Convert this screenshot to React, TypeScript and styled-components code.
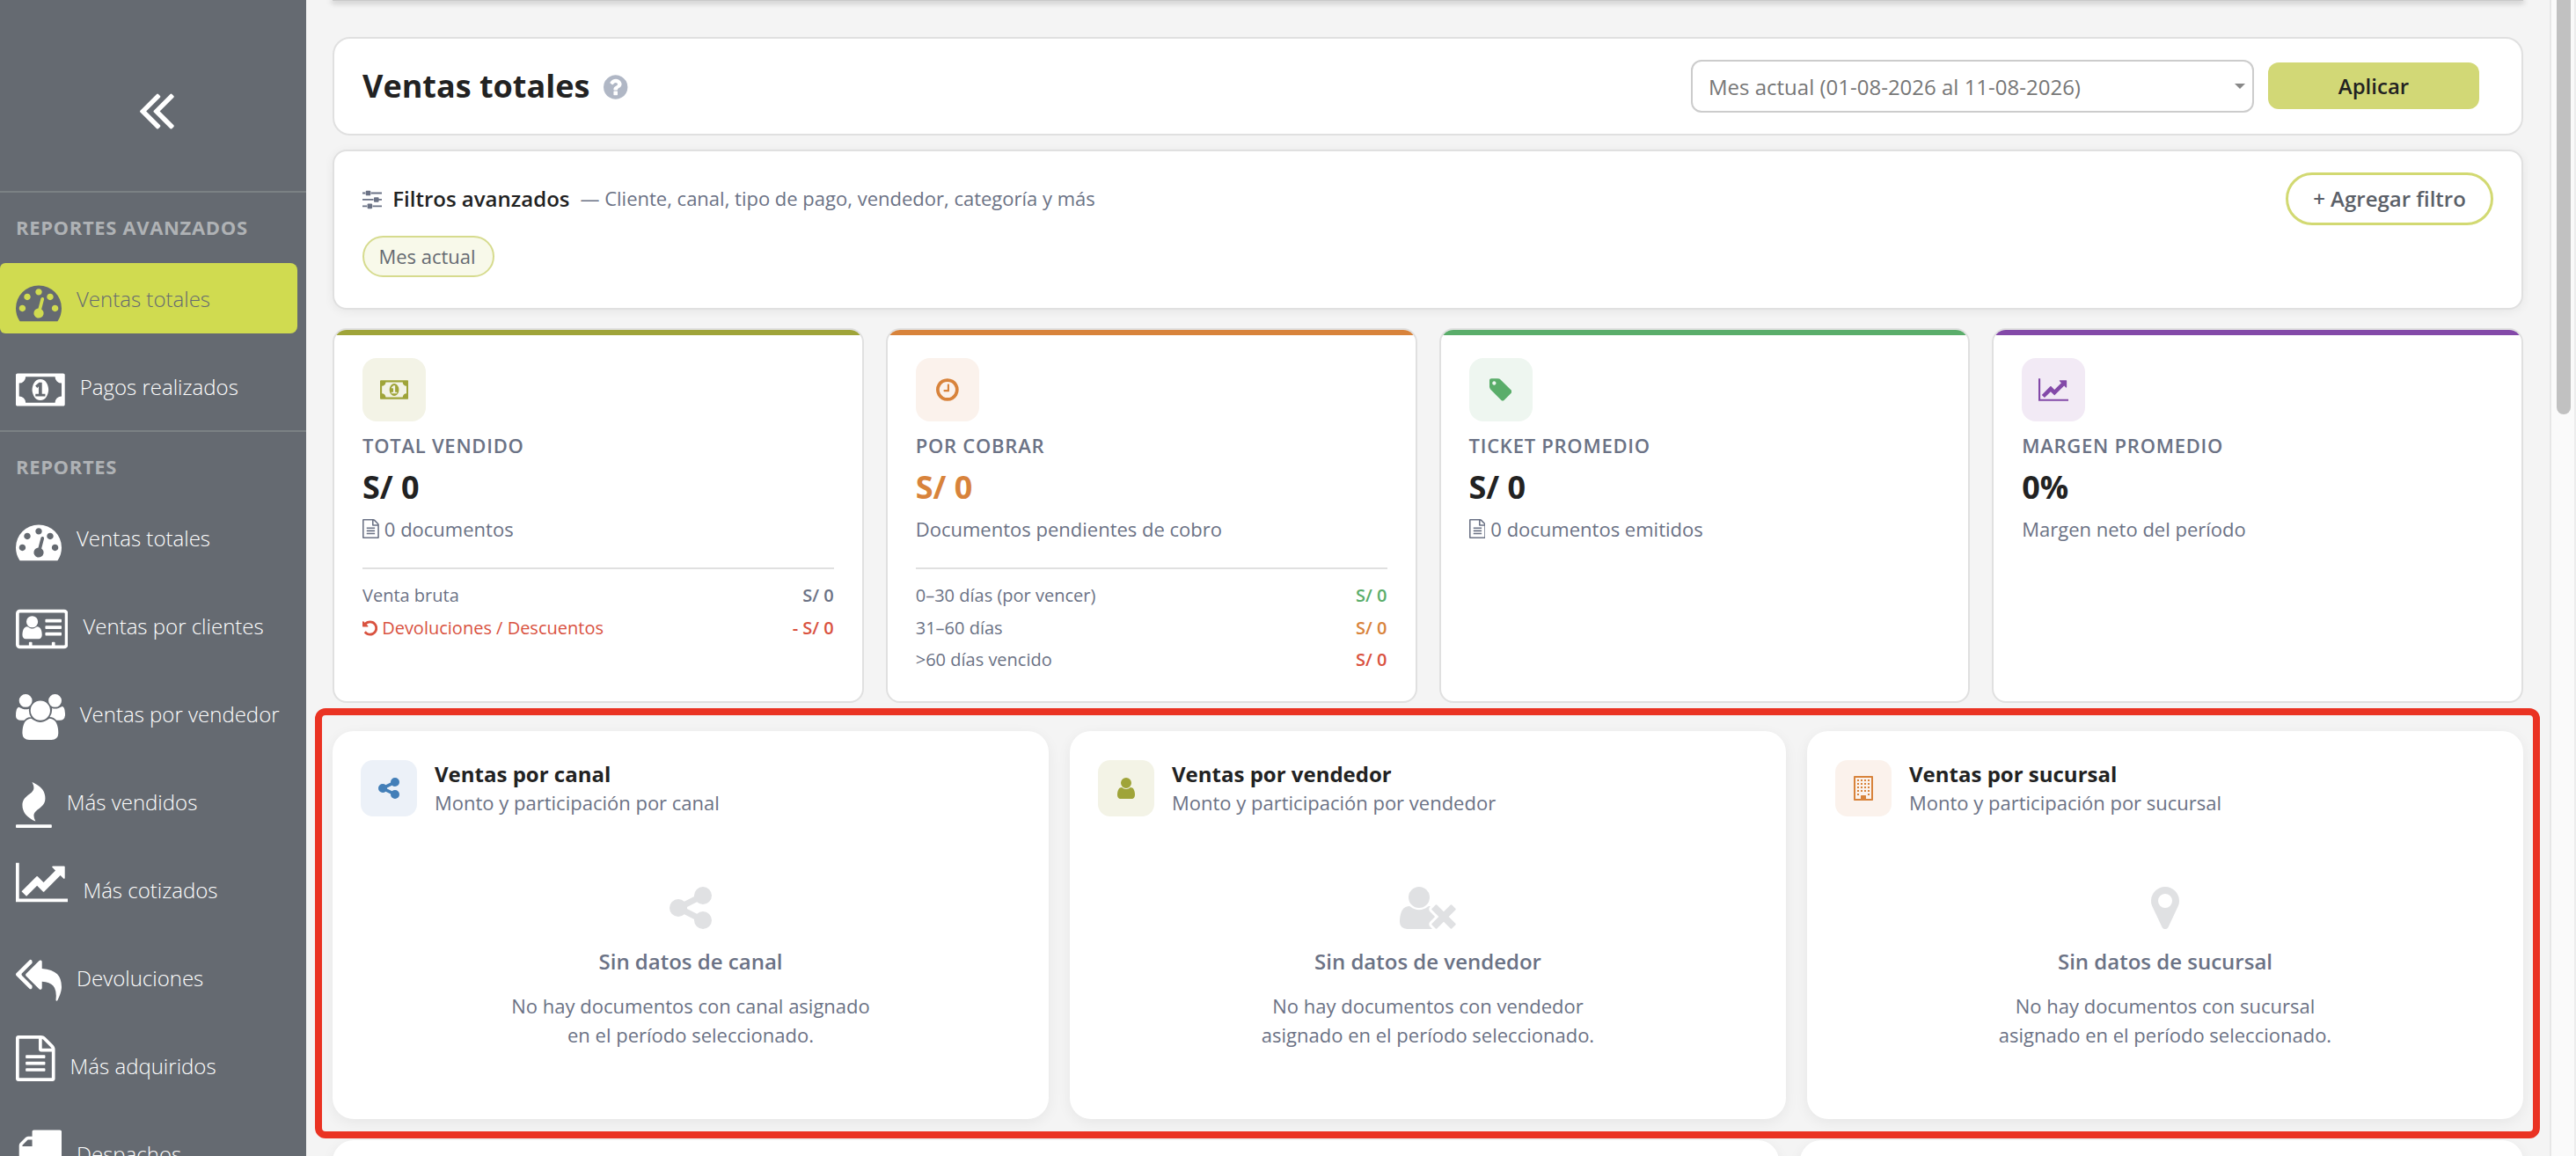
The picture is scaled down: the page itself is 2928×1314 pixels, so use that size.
import React from "react";
import styled, { createGlobalStyle } from "styled-components";

const GlobalStyle = createGlobalStyle`
  *, *::before, *::after { box-sizing: border-box; }
  html, body { margin: 0; padding: 0; overflow: hidden; }
  body {
    background: #f4f4f4;
    color: #222;
    font-family: "Open Sans", "Noto Sans", sans-serif;
    -webkit-font-smoothing: antialiased;
  }
  p, h1, h2, h3 { margin: 0; }
`;

type Glyph = { w: number; x?: number; d: string };

const glyphs: Record<string, Glyph> = {
  gauge: {
    w: 1792,
    d: "M384 1152q0-53-37.5-90.5t-90.5-37.5-90.5 37.5-37.5 90.5 37.5 90.5 90.5 37.5 90.5-37.5 37.5-90.5zm192-448q0-53-37.5-90.5t-90.5-37.5-90.5 37.5-37.5 90.5 37.5 90.5 90.5 37.5 90.5-37.5 37.5-90.5zm428 481l101-382q6-26-7.5-48.5t-38.5-29.5-48 6.5-30 39.5l-101 382q-60 5-107 43.5t-63 98.5q-20 77 20 146t117 89 146-20 89-117q16-60-6-117t-72-91zm660-33q0-53-37.5-90.5t-90.5-37.5-90.5 37.5-37.5 90.5 37.5 90.5 90.5 37.5 90.5-37.5 37.5-90.5zm-640-640q0-53-37.5-90.5t-90.5-37.5-90.5 37.5-37.5 90.5 37.5 90.5 90.5 37.5 90.5-37.5 37.5-90.5zm448 192q0-53-37.5-90.5t-90.5-37.5-90.5 37.5-37.5 90.5 37.5 90.5 90.5 37.5 90.5-37.5 37.5-90.5zm320 448q0 261-141 483-19 29-54 29h-1402q-35 0-54-29-141-221-141-483 0-182 71-348t191-286 286-191 348-71 348 71 286 191 191 286 71 348z",
  },
  money: {
    w: 1920,
    d: "M768 1152h384v-96h-128v-448h-114l-148 137 77 80q42-37 55-57h2v288h-128v96zm512-256q0 70-21 142t-59.5 134-101.5 101-138 39-138-39-101.5-101-59.5-134-21-142 21-142 59.5-134 101.5-101 138-39 138 39 101.5 101 59.5 134 21 142zm512 256v-512q-106 0-181-75t-75-181h-1152q0 106-75 181t-181 75v512q106 0 181 75t75 181h1152q0-106 75-181t181-75zm128-832v1152q0 26-19 45t-45 19h-1792q-26 0-45-19t-19-45v-1152q0-26 19-45t45-19h1792q26 0 45 19t19 45z",
  },
  addressCard: {
    w: 2048,
    d: "M1024 1131q0-64-9-117.5t-29.5-103-60.5-78-97-28.5q-6 4-30 18t-37.5 21.5-35.5 17.5-43 14.5-42 4.5-42-4.5-43-14.5-35.5-17.5-37.5-21.5-30-18q-57 0-97 28.5t-60.5 78-29.5 103-9 117.5 37 106.5 91 42.5h512q54 0 91-42.5t37-106.5zm-157-520q0-94-66.5-160.5t-160.5-66.5-160.5 66.5-66.5 160.5 66.5 160.5 160.5 66.5 160.5-66.5 66.5-160.5zm925 509v-64q0-14-9-23t-23-9h-576q-14 0-23 9t-9 23v64q0 14 9 23t23 9h576q14 0 23-9t9-23zm0-256v-64q0-14-9-23t-23-9h-576q-14 0-23 9t-9 23v64q0 14 9 23t23 9h576q14 0 23-9t9-23zm0-256v-64q0-14-9-23t-23-9h-576q-14 0-23 9t-9 23v64q0 14 9 23t23 9h576q14 0 23-9t9-23zM1920 1504v-1216q0-13-9.5-22.5t-22.5-9.5h-1728q-13 0-22.5 9.5t-9.5 22.5v1216q0 13 9.5 22.5t22.5 9.5h352v-96q0-14 9-23t23-9h64q14 0 23 9t9 23v96h768v-96q0-14 9-23t23-9h64q14 0 23 9t9 23v96h352q13 0 22.5-9.5t9.5-22.5zm128-1216v1216q0 66-47 113t-113 47h-1728q-66 0-113-47t-47-113v-1216q0-66 47-113t113-47h1728q66 0 113 47t47 113z",
  },
  users: {
    w: 1920,
    d: "M593 896q-162 5-265 128h-134q-82 0-138-40.5t-56-118.5q0-353 124-353 6 0 43.5 21t97.5 42.5 119 21.5q67 0 133-23-5 37-5 66 0 159 93 282zm1071 637q0 120-73 189.5t-194 69.5h-874q-121 0-194-69.5t-73-189.5q0-53 3.5-103.5t14-109 26.5-108.5 43-97.5 62-81 85.5-53.5 111.5-20q10 0 43 21.5t73 48 107 48 135 21.5 135-21.5 107-48 73-48 43-21.5q61 0 111.5 20t85.5 53.5 62 81 43 97.5 26.5 108.5 14 109 3.5 103.5zm-1024-1277q0 106-75 181t-181 75-181-75-75-181 75-181 181-75 181 75 75 181zm704 384q0 159-112.5 271.5t-271.5 112.5-271.5-112.5-112.5-271.5 112.5-271.5 271.5-112.5 271.5 112.5 112.5 271.5zm576 225q0 78-56 118.5t-138 40.5h-134q-103-123-265-128 93-123 93-282 0-29-5-66 66 23 133 23 59 0 119-21.5t97.5-42.5 43.5-21q124 0 124 353zm-128-609q0 106-75 181t-181 75-181-75-75-181 75-181 181-75 181 75 75 181z",
  },
  fire: {
    w: 1408,
    x: 192,
    d: "M1600 1696v64q0 13-9.5 22.5t-22.5 9.5h-1344q-13 0-22.5-9.5t-9.5-22.5v-64q0-13 9.5-22.5t22.5-9.5h1344q13 0 22.5 9.5t9.5 22.5zm-256-1056q0 78-24.5 144t-64 112.5-87.5 88-96 77.5-87.5 72-64 81.5-24.5 96.5q0 96 67 224l-4-1 1 1q-90-41-160-83t-138.5-100-113.5-122.5-72.5-150.5-27.5-184q0-78 24.5-144t64-112.5 87.5-88 96-77.5 87.5-72 64-81.5 24.5-96.5q0-94-66-224l3 1-1-1q90 41 160 83t138.5 100 113.5 122.5 72.5 150.5 27.5 184z",
  },
  lineChart: {
    w: 2048,
    d: "M2048 1536v128h-2048v-1536h128v1408h1920zm-128-1248v435q0 21-19.5 29.5t-35.5-7.5l-121-121-633 633q-10 10-23 10t-23-10l-233-233-416 416-192-192 585-585q10-10 23-10t23 10l233 233 464-464-121-121q-16-16-7.5-35.5t29.5-19.5h435q14 0 23 9t9 23z",
  },
  replyAll: {
    w: 1792,
    d: "M640 1082v70q0 42-39 59-13 5-25 5-27 0-45-19l-512-512q-19-19-19-45t19-45l512-512q29-31 70-14 39 17 39 59v69l-397 398q-19 19-19 45t19 45zm1152 58q0 58-17 133.5t-38.5 138-48 125-40.5 90.5l-20 40q-8 17-28 17-6 0-9-1-25-8-23-34 43-400-106-565-64-71-170.5-110.5t-267.5-52.5v251q0 42-39 59-13 5-25 5-27 0-45-19l-512-512q-19-19-19-45t19-45l512-512q29-31 70-14 39 17 39 59v262q411 28 599 221 169 173 169 509z",
  },
  fileText: {
    w: 1536,
    x: 128,
    d: "M1596 380q28 28 48 76t20 88v1152q0 40-28 68t-68 28h-1344q-40 0-68-28t-28-68v-1600q0-40 28-68t68-28h896q40 0 88 20t76 48zm-444-244v376h376q-10-29-22-41l-313-313q-12-12-41-22zm384 1528v-1024h-416q-40 0-68-28t-28-68v-416h-768v1536h1280zm-1024-864q0-14 9-23t23-9h704q14 0 23 9t9 23v64q0 14-9 23t-23 9h-704q-14 0-23-9t-9-23v-64zm736 224q14 0 23 9t9 23v64q0 14-9 23t-23 9h-704q-14 0-23-9t-9-23v-64q0-14 9-23t23-9h704zm0 256q14 0 23 9t9 23v64q0 14-9 23t-23 9h-704q-14 0-23-9t-9-23v-64q0-14 9-23t23-9h704z",
  },
  truck: {
    w: 1792,
    d: "M640 1408q0-52-38-90t-90-38-90 38-38 90 38 90 90 38 90-38 38-90zm-384-512h384v-256h-158q-13 0-22 9l-195 195q-9 9-9 22v30zm1280 512q0-52-38-90t-90-38-90 38-38 90 38 90 90 38 90-38 38-90zm256-1088v1024q0 15-4 26.5t-13.5 18.5-16.5 11.5-23.5 6-22.5 2-25.5 0-22.5-.5q0 106-75 181t-181 75-181-75-75-181h-384q0 106-75 181t-181 75-181-75-75-181h-64q-3 0-22.5.5t-25.5 0-22.5-2-23.5-6-16.5-11.5-13.5-18.5-4-26.5q0-26 19-45t45-19v-320q0-8-.5-35t0-38 2.5-34.5 6.5-37 14-30.5 22.5-30l198-198q19-19 50.5-32t58.5-13h160v-192q0-26 19-45t45-19h1024q26 0 45 19t19 45z",
  },
  share: {
    w: 1536,
    x: 128,
    d: "M1344 1024q133 0 226.5 93.5t93.5 226.5-93.5 226.5-226.5 93.5-226.5-93.5-93.5-226.5q0-12 2-34l-360-180q-92 86-218 86-133 0-226.5-93.5t-93.5-226.5 93.5-226.5 226.5-93.5q126 0 218 86l360-180q-2-22-2-34 0-133 93.5-226.5t226.5-93.5 226.5 93.5 93.5 226.5-93.5 226.5-226.5 93.5q-126 0-218-86l-360 180q2 22 2 34t-2 34l360 180q92-86 218-86z",
  },
  user: {
    w: 1280,
    x: 256,
    d: "M1536 1399q0 109-62.5 187t-150.5 78h-854q-88 0-150.5-78t-62.5-187q0-85 8.5-160.5t31.5-152 58.5-131 94-89 134.5-34.5q131 128 313 128t313-128q76 0 134.5 34.5t94 89 58.5 131 31.5 152 8.5 160.5zm-256-887q0 159-112.5 271.5t-271.5 112.5-271.5-112.5-112.5-271.5 112.5-271.5 271.5-112.5 271.5 112.5 112.5 271.5z",
  },
  userTimes: {
    w: 2048,
    d: "M704 896q-159 0-271.5-112.5t-112.5-271.5 112.5-271.5 271.5-112.5 271.5 112.5 112.5 271.5-112.5 271.5-271.5 112.5zm1077 320l249 249q9 9 9 23 0 13-9 22l-136 136q-9 9-22 9-14 0-23-9l-249-249-249 249q-9 9-23 9-13 0-22-9l-136-136q-9-9-9-22 0-14 9-23l249-249-249-249q-9-9-9-23 0-13 9-22l136-136q9-9 22-9 14 0 23 9l249 249 249-249q9-9 23-9 13 0 22 9l136 136q9 9 9 22 0 14-9 23zm-498 0l-181 181q-37 37-37 91 0 53 37 90l83 83q-21 3-44 3h-874q-121 0-194-69t-73-190q0-53 3.5-103.5t14-109 26.5-108.5 43-97.5 62-81 85.5-53.5 111.5-20q19 0 39 17 154 122 319 122t319-122q20-17 39-17 28 0 57 6-28 27-41 50t-13 56q0 54 37 91z",
  },
  marker: {
    w: 1024,
    x: 384,
    d: "M1152 640q0-106-75-181t-181-75-181 75-75 181 75 181 181 75 181-75 75-181zm256 0q0 109-33 179l-364 774q-16 33-47.5 52t-67.5 19-67.5-19-46.5-52l-365-774q-33-70-33-179 0-212 150-362t362-150 362 150 150 362z",
  },
  clock: {
    w: 1536,
    x: 128,
    d: "M1024 544v448q0 14-9 23t-23 9h-320q-14 0-23-9t-9-23v-64q0-14 9-23t23-9h224v-352q0-14 9-23t23-9h64q14 0 23 9t9 23zm416 352q0-148-73-273t-198-198-273-73-273 73-198 198-73 273 73 273 198 198 273 73 273-73 198-198 73-273zm224 0q0 209-103 385.5t-279.5 279.5-385.5 103-385.5-103-279.5-279.5-103-385.5 103-385.5 279.5-279.5 385.5-103 385.5 103 279.5 279.5 103 385.5z",
  },
  tag: {
    w: 1536,
    x: 128,
    d: "M576 448q0-53-37.5-90.5t-90.5-37.5-90.5 37.5-37.5 90.5 37.5 90.5 90.5 37.5 90.5-37.5 37.5-90.5zm1067 576q0 53-37 90l-491 492q-39 37-91 37-53 0-90-37l-715-716q-38-37-64.5-101t-26.5-117v-416q0-52 38-90t90-38h416q53 0 117 26.5t102 64.5l715 714q37 39 37 91z",
  },
  undo: {
    w: 1536,
    x: 128,
    d: "M1664 896q0 156-61 298t-164 245-245 164-298 61q-172 0-327-72.5t-264-204.5q-7-10-6.5-22.5t8.5-20.5l137-138q10-9 25-9 16 2 23 12 73 95 179 147t225 52q104 0 198.5-40.5t163.5-109.5 109.5-163.5 40.5-198.5-40.5-198.5-109.5-163.5-163.5-109.5-198.5-40.5q-98 0-188 35.5t-160 101.5l137 138q31 30 14 69-17 40-59 40h-448q-26 0-45-19t-19-45v-448q0-42 40-59 39-17 69 14l130 129q107-101 244.5-156.5t284.5-55.5q156 0 298 61t245 164 164 245 61 298z",
  },
  sliders: {
    w: 1536,
    d: "M352 1408v128h-352v-128h352zm352-128q26 0 45 19t19 45v256q0 26-19 45t-45 19h-256q-26 0-45-19t-19-45v-256q0-26 19-45t45-19h256zm160-384v128h-864v-128h864zm-640-512v128h-224v-128h224zm1312 1024v128h-736v-128h736zm-960-1152q26 0 45 19t19 45v256q0 26-19 45t-45 19h-256q-26 0-45-19t-19-45v-256q0-26 19-45t45-19h256zm640 512q26 0 45 19t19 45v256q0 26-19 45t-45 19h-256q-26 0-45-19t-19-45v-256q0-26 19-45t45-19h256zm320 128v128h-288v-128h288zm0-512v128h-864v-128h864z",
  },
  question: {
    w: 1536,
    x: 128,
    d: "M1024 1376v-192q0-14-9-23t-23-9h-192q-14 0-23 9t-9 23v192q0 14 9 23t23 9h192q14 0 23-9t9-23zm256-672q0-88-55.5-163t-138.5-116-170-41q-243 0-371 213-15 24 8 42l132 100q7 6 19 6 16 0 25-12 53-68 86-92 34-24 86-24 48 0 85.5 26t37.5 59q0 38-20 61t-68 45q-63 28-115.5 86.5t-52.5 125.5v36q0 14 9 23t23 9h192q14 0 23-9t9-23q0-19 21.5-49.5t54.5-49.5q32-18 49-28.5t46-35 44.5-48 28-60.5 12.5-81zm384 192q0 209-103 385.5t-279.5 279.5-385.5 103-385.5-103-279.5-279.5-103-385.5 103-385.5 279.5-279.5 385.5-103 385.5 103 279.5 279.5 103 385.5z",
  },
  collapse: {
    w: 966,
    x: 429,
    d: "M1011 1376q0 13-10 23l-50 50q-10 10-23 10t-23-10l-466-466q-10-10-10-23t10-23l466-466q10-10 23-10t23 10l50 50q10 10 10 23t-10 23l-393 393 393 393q10 10 10 23zm384 0q0 13-10 23l-50 50q-10 10-23 10t-23-10l-466-466q-10-10-10-23t10-23l466-466q10-10 23-10t23 10l50 50q10 10 10 23t-10 23l-393 393 393 393q10 10 10 23z",
  },
  building: {
    w: 1408,
    d: "M64 0h1280q26 0 45 19t19 45v1664q0 26-19 45t-45 19h-1280q-26 0-45-19t-19-45v-1664q0-26 19-45t45-19zM128 128v1536h384v-224q0-13 9.5-22.5t22.5-9.5h320q13 0 22.5 9.5t9.5 22.5v224h384v-1536zM256 256h128v128h-128zM512 256h128v128h-128zM768 256h128v128h-128zM1024 256h128v128h-128zM256 512h128v128h-128zM512 512h128v128h-128zM768 512h128v128h-128zM1024 512h128v128h-128zM256 768h128v128h-128zM512 768h128v128h-128zM768 768h128v128h-128zM1024 768h128v128h-128zM256 1024h128v128h-128zM512 1024h128v128h-128zM768 1024h128v128h-128zM1024 1024h128v128h-128zM256 1280h128v128h-128zM1024 1280h128v128h-128z",
  },
};

const Svg = styled.svg<{ $size: number; $w: number }>`
  display: block;
  flex: none;
  height: ${(p) => p.$size}px;
  width: ${(p) => (p.$size * p.$w) / 1792}px;
  fill: currentColor;
`;

function Icon({ name, size }: { name: string; size: number }) {
  const g = glyphs[name];
  return (
    <Svg $size={size} $w={g.w} viewBox={`${g.x ?? 0} 0 ${g.w} 1792`} aria-hidden="true">
      <path d={g.d} fillRule={name === "building" ? "evenodd" : "nonzero"} />
    </Svg>
  );
}

/* ---------- Shell ---------- */

const Shell = styled.div`
  display: flex;
  width: 2928px;
  height: 1314px;
  overflow: hidden;
`;

const Sidebar = styled.nav`
  flex: none;
  width: 348px;
  height: 1314px;
  overflow: hidden;
  background: #656a71;
  color: #fff;
`;

const Collapse = styled.div`
  display: flex;
  align-items: flex-start;
  padding: 88px 0 0 159px;
  height: 217px;
`;

const SectionTitle = styled.div`
  border-top: 2px solid #7b8184;
  padding: 0 18px;
  height: 82px;
  line-height: 79px;
  font-size: 22px;
  font-weight: 700;
  letter-spacing: 0.65px;
  color: #afb2b5;
`;

const NavItem = styled.div<{ $active?: boolean }>`
  display: flex;
  gap: 17px;
  width: 338px;
  height: 80px;
  margin-bottom: 20px;
  padding-left: 18px;
  border-radius: 6px 8px 8px 6px;
  background: ${(p) => (p.$active ? "#d0db50" : "transparent")};
  color: ${(p) => (p.$active ? "#656a71" : "#fff")};
`;

const NavGroup = styled.div<{ $last?: boolean }>`
  height: ${(p) => (p.$last ? "auto" : "190px")};
`;

const NavIcon = styled.span<{ $top: number }>`
  padding-top: ${(p) => p.$top}px;
`;

const NavText = styled.span`
  line-height: 82px;
  font-size: 24px;
  font-weight: 300;
  white-space: nowrap;
`;

const Main = styled.main`
  flex: none;
  width: 2550px;
  height: 1314px;
  padding: 0 30px;
  overflow: hidden;
`;

const ScrollTrack = styled.div`
  flex: none;
  width: 30px;
  height: 1314px;
  padding-left: 6px;
  border-left: 2px solid #e7e7e7;
  border-right: 2px solid #ededed;
  background: #fafafa;
`;

const ScrollThumb = styled.div`
  width: 16px;
  height: 471px;
  border-radius: 0 0 8px 8px;
  background: #c1c1c1;
`;

/* ---------- Header ---------- */

const PreviousCardEdge = styled.div`
  height: 1px;
  margin-bottom: 41px;
  background: #c9c9c9;
  box-shadow: 0 1px 6px 1px rgba(0, 0, 0, 0.3);
`;

const HeaderCard = styled.header`
  display: flex;
  align-items: center;
  height: 112px;
  padding: 0 48px 0 32px;
  border: 2px solid #e0e0e0;
  border-radius: 20px;
  background: #fff;
`;

const PageTitle = styled.h1`
  font-size: 36px;
  font-weight: 700;
  line-height: 48px;
`;

const Help = styled.span`
  margin: 1px auto 0 16px;
  color: #b0b7c5;
`;

const PeriodSelect = styled.div`
  display: flex;
  align-items: center;
  justify-content: space-between;
  width: 640px;
  height: 60px;
  margin-right: 16px;
  padding: 0 8px 0 18px;
  border: 2px solid #ccc;
  border-radius: 12px;
  font-size: 24px;
  color: #777;
`;

const Caret = styled.span`
  border: 6px solid transparent;
  border-top-color: #888;
  border-bottom: 0;
`;

const ApplyButton = styled.button`
  width: 240px;
  height: 53px;
  margin-bottom: 1px;
  padding: 0;
  border: 0;
  border-radius: 12px;
  background: #d2d876;
  color: #222;
  font: 600 24px "Open Sans", "Noto Sans", sans-serif;
`;

/* ---------- Filters ---------- */

const FilterCard = styled.section`
  height: 182px;
  margin: 16px 0 21px;
  padding: 24px 32px 0;
  border: 2px solid #e0e0e0;
  border-radius: 16px;
  background: #fff;
  box-shadow: 0 2px 12px rgba(0, 0, 0, 0.06);
`;

const FilterHead = styled.div`
  display: flex;
  align-items: center;
  height: 60px;
  color: #6b7285;
`;

const FilterTitle = styled.h2`
  margin: 0 12px;
  padding-bottom: 2px;
  font-size: 24px;
  font-weight: 600;
  color: #222;
`;

const FilterHint = styled.span`
  margin-right: auto;
  padding-bottom: 2px;
  font-size: 22px;
`;

const AddFilter = styled.button`
  width: 236px;
  height: 60px;
  padding: 0 0 1px;
  border: 3px solid #d2d972;
  border-radius: 30px;
  background: #fff;
  color: #5b6068;
  font: 600 24px "Open Sans", "Noto Sans", sans-serif;
`;

const Chip = styled.span`
  display: inline-flex;
  align-items: center;
  justify-content: center;
  width: 150px;
  height: 47px;
  margin-top: 12px;
  padding: 0 3px 2px 0;
  border: 2px solid #d6db8e;
  border-radius: 24px;
  background: #f8f9ea;
  font-size: 22px;
  color: #656a71;
`;

/* ---------- KPI cards ---------- */

const KpiGrid = styled.section`
  display: grid;
  grid-template-columns: repeat(4, 1fr);
  gap: 25px;
  height: 426px;
`;

const KpiCard = styled.article`
  overflow: hidden;
  border: 2px solid #e0e0e0;
  border-radius: 16px;
  background: #fff;
`;

const KpiStrip = styled.div<{ $color: string }>`
  height: 6px;
  background: ${(p) => p.$color};
`;

const KpiBody = styled.div`
  display: flex;
  flex-direction: column;
  padding: 26px 32px 0;
  color: #6b7285;
`;

const IconTile = styled.div<{ $size: number; $color: string; $bg: string }>`
  display: flex;
  flex: none;
  align-items: center;
  justify-content: center;
  width: ${(p) => p.$size}px;
  height: ${(p) => p.$size}px;
  border-radius: ${(p) => (p.$size > 70 ? 16 : 14)}px;
  background: ${(p) => p.$bg};
  color: ${(p) => p.$color};
`;

const KpiLabel = styled.h2`
  margin-top: 12px;
  font-size: 22px;
  font-weight: 600;
  line-height: 30px;
  letter-spacing: 0.75px;
`;

const KpiValue = styled.p<{ $color: string }>`
  margin-top: 11px;
  font-size: 36px;
  font-weight: 700;
  line-height: 44px;
  color: ${(p) => p.$color};
`;

const KpiNote = styled.p`
  display: flex;
  align-items: center;
  gap: 6px;
  margin-top: 10px;
  font-size: 22px;
  line-height: 30px;
`;

const Breakdown = styled.div`
  margin-top: 29px;
  padding-top: 12px;
  border-top: 2px solid #e0e0e0;
`;

const BreakdownRow = styled.div<{ $color?: string }>`
  display: flex;
  justify-content: space-between;
  height: 36.6px;
  font-size: 20px;
  line-height: 36px;
  color: ${(p) => p.$color ?? "inherit"};
`;

const RowLabel = styled.span`
  display: flex;
  align-items: center;
  gap: 5px;
`;

const RowAmount = styled.span<{ $color?: string }>`
  font-weight: 600;
  color: ${(p) => p.$color ?? "inherit"};
`;

/* ---------- Panels ---------- */

const Highlighted = styled.section`
  position: relative;
  display: grid;
  grid-template-columns: repeat(3, 1fr);
  gap: 24px;
  height: 441px;
  margin: 32px 0 24px;
`;

const HighlightFrame = styled.div`
  position: absolute;
  top: -26px;
  bottom: -22px;
  left: -20px;
  right: -19px;
  border: 8px solid #ea3323;
  border-radius: 12px;
  pointer-events: none;
`;

const Panel = styled.article`
  padding: 31px 32px 0;
  border-radius: 24px;
  background: #fff;
  box-shadow: 0 4px 16px rgba(0, 0, 0, 0.06);
  color: #6b7285;
`;

const PanelHead = styled.div`
  display: flex;
  align-items: center;
  gap: 20px;
  height: 68px;
`;

const PanelTitle = styled.h2`
  font-size: 24px;
  font-weight: 700;
  line-height: 33px;
  color: #222;
`;

const PanelSub = styled.p`
  font-size: 22px;
  line-height: 33px;
`;

const Empty = styled.div`
  display: flex;
  flex-direction: column;
  align-items: center;
  margin-top: 74px;
  text-align: center;
`;

const EmptyIcon = styled.span`
  color: #e0e1e3;
`;

const EmptyTitle = styled.h3`
  margin-top: 15px;
  font-size: 24px;
  font-weight: 600;
  line-height: 36px;
`;

const EmptyText = styled.p`
  margin-top: 16px;
  font-size: 22px;
  line-height: 33px;
`;

const NextRow = styled.div`
  display: grid;
  grid-template-columns: 1644px 1fr;
  gap: 24px;
  height: 200px;
`;

/* ---------- Data ---------- */

type Nav = { icon: string; label: string; top: number; active?: boolean };

const advanced: Nav[] = [
  { icon: "gauge", label: "Ventas totales", top: 17.5, active: true },
  { icon: "money", label: "Pagos realizados", top: 17.5 },
];

const reports: Nav[] = [
  { icon: "gauge", label: "Ventas totales", top: 17.5 },
  { icon: "addressCard", label: "Ventas por clientes", top: 17.5 },
  { icon: "users", label: "Ventas por vendedor", top: 17.5 },
  { icon: "fire", label: "Más vendidos", top: 17.5 },
  { icon: "lineChart", label: "Más cotizados", top: 5.5 },
  { icon: "replyAll", label: "Devoluciones", top: 17.5 },
  { icon: "fileText", label: "Más adquiridos", top: 5.5 },
  { icon: "truck", label: "Despachos", top: 5.5 },
];

const GREEN = "#5aad6a";
const ORANGE = "#d8833b";
const RED = "#d9523f";
const OLIVE = "#9fa439";
const PURPLE = "#8349a8";

type Row = { label: string; amount: string; icon?: string; rowColor?: string; color?: string };
type Kpi = {
  icon: string;
  color: string;
  bg: string;
  label: string;
  value: string;
  valueColor: string;
  note: string;
  noteIcon?: boolean;
  rows?: Row[];
};

const kpis: Kpi[] = [
  {
    icon: "money", color: OLIVE, bg: "#f3f3e6", label: "TOTAL VENDIDO", value: "S/ 0", valueColor: "#222",
    note: "0 documentos", noteIcon: true,
    rows: [
      { label: "Venta bruta", amount: "S/ 0" },
      { label: "Devoluciones / Descuentos", amount: "- S/ 0", icon: "undo", rowColor: RED },
    ],
  },
  {
    icon: "clock", color: ORANGE, bg: "#fbf2ec", label: "POR COBRAR", value: "S/ 0", valueColor: ORANGE,
    note: "Documentos pendientes de cobro",
    rows: [
      { label: "0–30 días (por vencer)", amount: "S/ 0", color: GREEN },
      { label: "31–60 días", amount: "S/ 0", color: ORANGE },
      { label: ">60 días vencido", amount: "S/ 0", color: RED },
    ],
  },
  {
    icon: "tag", color: GREEN, bg: "#eef6f0", label: "TICKET PROMEDIO", value: "S/ 0", valueColor: "#222",
    note: "0 documentos emitidos", noteIcon: true,
  },
  {
    icon: "lineChart", color: PURPLE, bg: "#f2eaf5", label: "MARGEN PROMEDIO", value: "0%", valueColor: "#222",
    note: "Margen neto del período",
  },
];

const panels = [
  {
    icon: "share", color: "#437fb8", bg: "#ecf1f8", title: "Ventas por canal",
    sub: "Monto y participación por canal", emptyIcon: "share", empty: "Sin datos de canal",
    lines: ["No hay documentos con canal asignado", "en el período seleccionado."],
  },
  {
    icon: "user", color: OLIVE, bg: "#f3f3e6", title: "Ventas por vendedor",
    sub: "Monto y participación por vendedor", emptyIcon: "userTimes", empty: "Sin datos de vendedor",
    lines: ["No hay documentos con vendedor", "asignado en el período seleccionado."],
  },
  {
    icon: "building", color: ORANGE, bg: "#fbf2ec", title: "Ventas por sucursal",
    sub: "Monto y participación por sucursal", emptyIcon: "marker", empty: "Sin datos de sucursal",
    lines: ["No hay documentos con sucursal", "asignado en el período seleccionado."],
  },
];

function NavList({ items }: { items: Nav[] }) {
  return (
    <>
      {items.map((item) => (
        <NavItem key={item.label} $active={item.active}>
          <NavIcon $top={item.top}>
            <Icon name={item.icon} size={52} />
          </NavIcon>
          <NavText>{item.label}</NavText>
        </NavItem>
      ))}
    </>
  );
}

export default function App() {
  return (
    <Shell>
      <GlobalStyle />
      <Sidebar>
        <Collapse>
          <Icon name="collapse" size={72} />
        </Collapse>
        <SectionTitle>REPORTES AVANZADOS</SectionTitle>
        <NavGroup>
          <NavList items={advanced} />
        </NavGroup>
        <SectionTitle>REPORTES</SectionTitle>
        <NavGroup $last>
          <NavList items={reports} />
        </NavGroup>
      </Sidebar>

      <Main>
        <PreviousCardEdge />
        <HeaderCard>
          <PageTitle>Ventas totales</PageTitle>
          <Help>
            <Icon name="question" size={32} />
          </Help>
          <PeriodSelect>
            Mes actual (01-08-2026 al 11-08-2026)
            <Caret />
          </PeriodSelect>
          <ApplyButton>Aplicar</ApplyButton>
        </HeaderCard>

        <FilterCard>
          <FilterHead>
            <Icon name="sliders" size={26} />
            <FilterTitle>Filtros avanzados</FilterTitle>
            <FilterHint>— Cliente, canal, tipo de pago, vendedor, categoría y más</FilterHint>
            <AddFilter>+ Agregar filtro</AddFilter>
          </FilterHead>
          <Chip>Mes actual</Chip>
        </FilterCard>

        <KpiGrid>
          {kpis.map((k) => (
            <KpiCard key={k.label}>
              <KpiStrip $color={k.color} />
              <KpiBody>
                <IconTile $size={72} $color={k.color} $bg={k.bg}>
                  <Icon name={k.icon} size={30} />
                </IconTile>
                <KpiLabel>{k.label}</KpiLabel>
                <KpiValue $color={k.valueColor}>{k.value}</KpiValue>
                <KpiNote>
                  {k.noteIcon && <Icon name="fileText" size={22} />}
                  {k.note}
                </KpiNote>
                {k.rows && (
                  <Breakdown>
                    {k.rows.map((r) => (
                      <BreakdownRow key={r.label} $color={r.rowColor}>
                        <RowLabel>
                          {r.icon && <Icon name={r.icon} size={20} />}
                          {r.label}
                        </RowLabel>
                        <RowAmount $color={r.color}>{r.amount}</RowAmount>
                      </BreakdownRow>
                    ))}
                  </Breakdown>
                )}
              </KpiBody>
            </KpiCard>
          ))}
        </KpiGrid>

        <Highlighted>
          {panels.map((p) => (
            <Panel key={p.title}>
              <PanelHead>
                <IconTile $size={64} $color={p.color} $bg={p.bg}>
                  <Icon name={p.icon} size={28} />
                </IconTile>
                <div>
                  <PanelTitle>{p.title}</PanelTitle>
                  <PanelSub>{p.sub}</PanelSub>
                </div>
              </PanelHead>
              <Empty>
                <EmptyIcon>
                  <Icon name={p.emptyIcon} size={56} />
                </EmptyIcon>
                <EmptyTitle>{p.empty}</EmptyTitle>
                <EmptyText>
                  {p.lines[0]}
                  <br />
                  {p.lines[1]}
                </EmptyText>
              </Empty>
            </Panel>
          ))}
          <HighlightFrame />
        </Highlighted>

        <NextRow>
          <Panel />
          <Panel />
        </NextRow>
      </Main>

      <ScrollTrack>
        <ScrollThumb />
      </ScrollTrack>
    </Shell>
  );
}
